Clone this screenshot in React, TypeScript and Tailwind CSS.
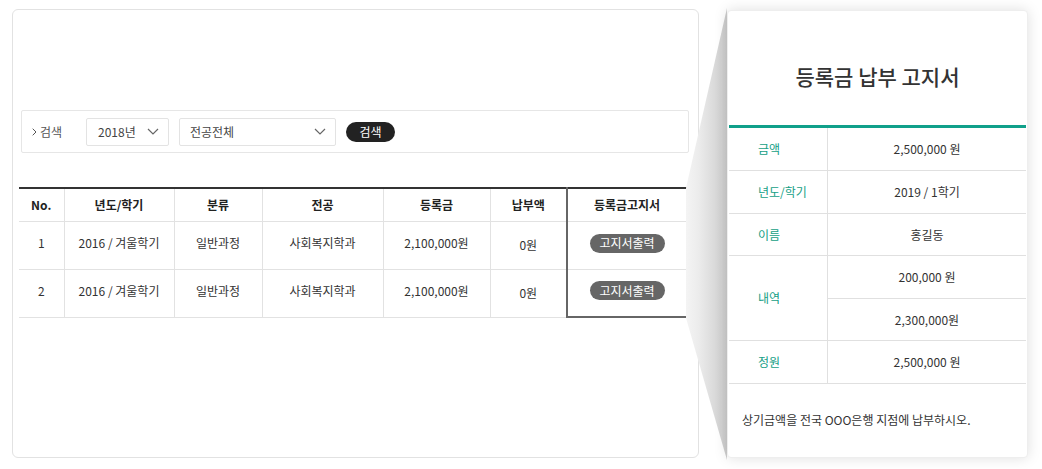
import React from "react";

const Chevron = () => (
  <svg width="12" height="7" viewBox="0 0 12 7" fill="none">
    <polyline points="1,1 6,6 11,1" stroke="#666" strokeWidth="1.2" />
  </svg>
);

const rows = [
  { no: "1", term: "2016 / 겨울학기", cat: "일반과정", major: "사회복지학과", fee: "2,100,000원", paid: "0원" },
  { no: "2", term: "2016 / 겨울학기", cat: "일반과정", major: "사회복지학과", fee: "2,100,000원", paid: "0원" },
];

export default function App() {
  return (
    <div className="relative w-[1042px] h-[469px] bg-white font-['Noto_Sans_CJK_KR',sans-serif] text-[#333] overflow-hidden">
      <div className="flex items-start pt-[9px] pl-[12px]">
        {/* Main panel */}
        <div className="w-[687px] h-[449px] border border-[#e2e2e2] rounded-[6px] bg-white flex flex-col">
          <div className="mt-[100px] ml-[8px] w-[668px] h-[43px] border border-[#e6e6e6] rounded-[2px] flex items-center">
            <div className="flex items-center ml-[10px] w-[54px] text-[12px] text-[#555]">
              <svg width="5" height="8" viewBox="0 0 5 8" fill="none" className="mr-[3px]">
                <polyline points="0.7,0.7 4,4 0.7,7.3" stroke="#555" strokeWidth="1" />
              </svg>
              <span>검색</span>
            </div>
            <div className="w-[83px] h-[28px] border border-[#e3e3e3] rounded-[2px] flex items-center justify-between pl-[11px] pr-[9px] text-[12px] text-[#444]">
              <span>2018년</span>
              <Chevron />
            </div>
            <div className="ml-[10px] w-[157px] h-[28px] border border-[#e3e3e3] rounded-[2px] flex items-center justify-between pl-[10px] pr-[9px] text-[12px] text-[#444]">
              <span>전공전체</span>
              <Chevron />
            </div>
            <div className="ml-[10px] w-[49px] h-[20px] rounded-full bg-[#222] text-white text-[12px] flex items-center justify-center">
              검색
            </div>
          </div>

          <table className="mt-[34px] ml-[6px] w-[668px] border-collapse table-fixed text-[12px]">
            <colgroup>
              <col className="w-[45px]" />
              <col className="w-[110px]" />
              <col className="w-[88px]" />
              <col className="w-[121px]" />
              <col className="w-[107px]" />
              <col className="w-[77px]" />
              <col className="w-[120px]" />
            </colgroup>
            <thead>
              <tr className="h-[33px] border-t-2 border-[#333] font-bold text-[#222]">
                <th className="border-b border-[#e2e2e2]">No.</th>
                <th className="border-b border-l border-[#e2e2e2]">년도/학기</th>
                <th className="border-b border-l border-[#e2e2e2]">분류</th>
                <th className="border-b border-l border-[#e2e2e2]">전공</th>
                <th className="border-b border-l border-[#e2e2e2]">등록금</th>
                <th className="border-b border-l border-[#e2e2e2]">납부액</th>
                <th className="border-b border-b-[#e2e2e2] border-x-2 border-x-[#666]">등록금고지서</th>
              </tr>
            </thead>
            <tbody>
              {rows.map((r, i) => (
                <tr key={i} className="h-[48px] text-center">
                  <td className="border-b border-[#e2e2e2] pb-[4px]">{r.no}</td>
                  <td className="border-b border-l border-[#e2e2e2] pb-[4px]">{r.term}</td>
                  <td className="border-b border-l border-[#e2e2e2] pb-[4px]">{r.cat}</td>
                  <td className="border-b border-l border-[#e2e2e2] pb-[4px]">{r.major}</td>
                  <td className="border-b border-l border-[#e2e2e2] pb-[4px]">{r.fee}</td>
                  <td className="border-b border-l border-[#e2e2e2]">{r.paid}</td>
                  <td
                    className={
                      i === rows.length - 1
                        ? "border-x-2 border-b-2 border-[#666] pb-[4px]"
                        : "border-x-2 border-x-[#666] border-b border-b-[#e2e2e2] pb-[4px]"
                    }
                  >
                    <div className="mx-auto w-[75px] h-[19px] rounded-full bg-[#666] text-white text-[12px] flex items-center justify-center">
                      고지서출력
                    </div>
                  </td>
                </tr>
              ))}
            </tbody>
          </table>
        </div>
      </div>

      {/* callout connector */}
      <svg className="absolute left-0 top-0" width="1042" height="469" viewBox="0 0 1042 469">
        <defs>
          <linearGradient id="cg" x1="686" y1="0" x2="727" y2="0" gradientUnits="userSpaceOnUse">
            <stop offset="0" stopColor="#f4f4f4" />
            <stop offset="0.3" stopColor="#ececec" />
            <stop offset="1" stopColor="#cccccc" />
          </linearGradient>
        </defs>
        <polygon points="686,188 727,8 727,460 686,318" fill="url(#cg)" />
      </svg>

      {/* Popup */}
      <div className="absolute left-[727px] top-[10px] w-[301px] h-[448px] bg-white rounded-[4px] border border-[#eeeeee] shadow-[0_0_14px_rgba(0,0,0,0.13)] px-[1px]">
        <div className="pt-[50px] h-[114px] text-center text-[21px] leading-[30px] font-medium text-[#333]">
          등록금 납부 고지서
        </div>
        <div className="border-t-[3px] border-[#10a08a] text-[12px]">
          <div className="flex h-[43px] border-b border-[#e0e0e0]">
            <div className="w-[99px] border-r border-[#e0e0e0] pl-[29px] flex items-center text-[#16a086]">금액</div>
            <div className="flex-1 flex items-center justify-center">2,500,000 원</div>
          </div>
          <div className="flex h-[43px] border-b border-[#e0e0e0]">
            <div className="w-[99px] border-r border-[#e0e0e0] pl-[29px] flex items-center text-[#16a086]">년도/학기</div>
            <div className="flex-1 flex items-center justify-center">2019 / 1학기</div>
          </div>
          <div className="flex h-[42px] border-b border-[#e0e0e0]">
            <div className="w-[99px] border-r border-[#e0e0e0] pl-[29px] flex items-center text-[#16a086]">이름</div>
            <div className="flex-1 flex items-center justify-center">홍길동</div>
          </div>
          <div className="flex h-[85px] border-b border-[#e0e0e0]">
            <div className="w-[99px] border-r border-[#e0e0e0] pl-[29px] flex items-center text-[#16a086]">내역</div>
            <div className="flex-1 flex flex-col">
              <div className="h-[43px] border-b border-[#e0e0e0] flex items-center justify-center">200,000 원</div>
              <div className="flex-1 flex items-center justify-center">2,300,000원</div>
            </div>
          </div>
          <div className="flex h-[43px] border-b border-[#e0e0e0]">
            <div className="w-[99px] border-r border-[#e0e0e0] pl-[29px] flex items-center text-[#16a086]">정원</div>
            <div className="flex-1 flex items-center justify-center">2,500,000 원</div>
          </div>
          <div className="pt-[27px] pl-[13px] text-[12px] text-[#333]">상기금액을 전국 OOO은행 지점에 납부하시오.</div>
        </div>
      </div>
    </div>
  );
}
